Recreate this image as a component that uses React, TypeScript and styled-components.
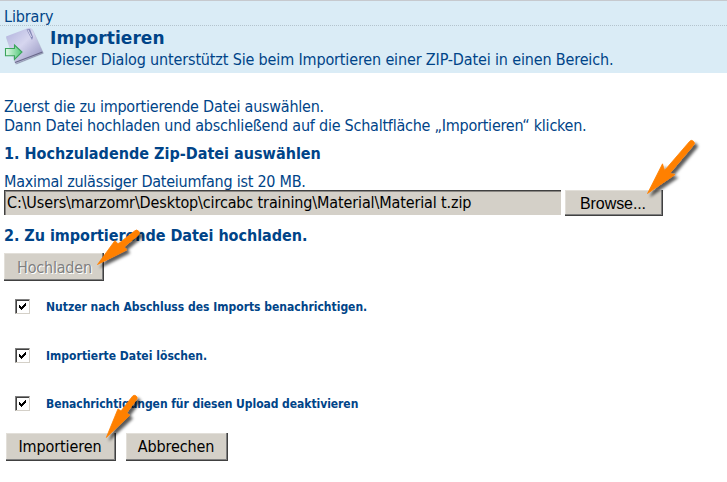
import React from "react";
import styled, { createGlobalStyle, css } from "styled-components";

const GlobalStyle = createGlobalStyle`
  * { box-sizing: border-box; }
  body { margin: 0; background: #fff; }
`;

const tahoma = `"DejaVu Sans Condensed", Tahoma, "DejaVu Sans", sans-serif`;
const navy = "#004488";

const Page = styled.main`
  position: relative;
  width: 727px;
  height: 482px;
  overflow: hidden;
  color: ${navy};
  font-family: ${tahoma};
  font-size: 16px;
  line-height: 19px;
  white-space: nowrap;
`;

const Header = styled.header`
  height: 73px;
  border-top: 1px solid #c6c9ce;
  background: #daecf6;
`;

const Breadcrumb = styled.div`
  height: 25px;
  padding: 6px 0 0 4px;
  border-bottom: 1px dotted #b4c4ce;
  letter-spacing: -0.13px;
`;

const TitleBar = styled.div`
  display: flex;
  gap: 6px;
  padding-left: 4px;
`;

const DialogIcon = styled.svg`
  display: block;
  flex: none;
  width: 40px;
  height: 42px;
`;

const Title = styled.h1`
  margin: 2px 0 0;
  font-family: "DejaVu Sans", Verdana, sans-serif;
  font-size: 17px;
  line-height: 20px;
  letter-spacing: 0.08px;
`;

const Subtitle = styled.p`
  margin: 2px 0 0 1px;
  letter-spacing: -0.15px;
`;

const Form = styled.form`
  display: flex;
  flex-direction: column;
  align-items: flex-start;
  padding: 24px 0 0 4px;
`;

const Note = styled.p<{ $track: number }>`
  margin: 0;
  letter-spacing: ${(p) => p.$track}px;
`;

const Step = styled.h2<{ $above: number; $below: number; $track: number }>`
  margin: ${(p) => p.$above}px 0 ${(p) => p.$below}px;
  font-size: 16px;
  letter-spacing: ${(p) => p.$track}px;
`;

const FileRow = styled.div`
  display: flex;
  gap: 4px;
  margin-top: -1px;
`;

const FilePath = styled.output`
  width: 557px;
  height: 25px;
  padding: 2px 0 0 2px;
  border-top: 1px solid #404040;
  border-left: 1px solid #404040;
  box-shadow: inset 1px 1px #8a8783;
  background: #d4d0c8;
  color: #000;
  letter-spacing: -0.13px;
`;

const Button = styled.button<{ $width: number; $height?: number; $track?: number; $arial?: boolean }>`
  width: ${(p) => p.$width}px;
  height: ${(p) => p.$height ?? 28}px;
  padding: 0 2px 0 0;
  border: 0;
  background: #d4d0c8;
  box-shadow: inset -1px -1px #404040, inset -2px -2px #808080, inset 1px 1px #e2dfd9;
  color: #000;
  font: 16px/19px ${tahoma};
  letter-spacing: ${(p) => p.$track ?? -0.1}px;
  ${(p) =>
    p.$arial &&
    css`
      font-family: "Liberation Sans", Arial, sans-serif;
    `}
  &:disabled {
    padding: 0 0 0 1px;
    color: #808080;
    text-shadow: 1px 1px #fff;
  }
`;

const Options = styled.div`
  display: flex;
  flex-direction: column;
  gap: 33.5px;
  margin: 18px 0 0 11px;
`;

const Option = styled.label<{ $track: number }>`
  display: flex;
  align-items: center;
  gap: 16px;
  height: 15px;
  font-size: 12px;
  font-weight: 700;
  line-height: 15px;
  letter-spacing: ${(p) => p.$track}px;
`;

const OptionText = styled.span`
  padding-top: 2px;
`;

const Box = styled.span`
  display: flex;
  width: 15px;
  height: 15px;
  border: 1px solid;
  border-color: #808080 #d4d0c8 #d4d0c8 #808080;
  box-shadow: inset 1px 1px #404040;
  background: #fff;
`;

const Actions = styled.div`
  display: flex;
  gap: 10px;
  margin: 21.5px 0 0 2px;
`;

const Pointers = styled.svg`
  position: absolute;
  inset: 0;
  width: 727px;
  height: 482px;
  pointer-events: none;
  path { fill: #ff8000; stroke: #ff8000; stroke-width: 0.8; }
`;

function Checked() {
  return (
    <Box>
      <svg width="13" height="13" viewBox="0 0 13 13" shapeRendering="crispEdges">
        <path d="M3 5h1v1h1v1h1v-1h1v-1h1v-1h1v-1h1v3h-1v1h-1v1h-1v1h-1v1h-1v-1h-1v-1h-1z" fill="#000" />
      </svg>
    </Box>
  );
}

export default function App() {
  return (
    <Page>
      <GlobalStyle />
      <Header>
        <Breadcrumb>Library</Breadcrumb>
        <TitleBar>
          <DialogIcon viewBox="0 0 40 42">
            <defs>
              <linearGradient id="sheet" x1="0" y1="0" x2="1" y2="1">
                <stop offset="0" stopColor="#aeb0dc" />
                <stop offset=".45" stopColor="#d6d6ef" />
                <stop offset="1" stopColor="#8c8cba" />
              </linearGradient>
              <linearGradient id="go" x1="0" y1="0" x2="1" y2="0">
                <stop offset="0" stopColor="#e4faeb" />
                <stop offset="1" stopColor="#52c878" />
              </linearGradient>
              <filter id="sheetShade" x="-20%" y="-20%" width="150%" height="150%">
                <feDropShadow dx=".5" dy="1" stdDeviation=".7" floodColor="#555577" floodOpacity=".55" />
              </filter>
            </defs>
            <path d="M2 10.500L25 1.800Q27.500 1.500 28.500 4L39 26.500L11.500 37.500Z" fill="url(#sheet)" filter="url(#sheetShade)" />
            <path d="M11 36.500L38.500 26" stroke="#696989" strokeWidth="1.300" />
            <path d="M22.500 3.500L28 14L29 11L26 3Z" fill="#8588b7" />
            <path d="M24 4L27.500 11" stroke="#dedef4" strokeWidth="1" />
            <path d="M1.500 22.500H10.500V19L18 26L10.500 33.500V29.700H1.500Z" fill="url(#go)" stroke="#3ba45c" strokeWidth="1.100" />
          </DialogIcon>
          <div>
            <Title>Importieren</Title>
            <Subtitle>Dieser Dialog unterstützt Sie beim Importieren einer ZIP-Datei in einen Bereich.</Subtitle>
          </div>
        </TitleBar>
      </Header>

      <Form onSubmit={(e) => e.preventDefault()}>
        <Note $track={-0.24}>Zuerst die zu importierende Datei auswählen.</Note>
        <Note $track={-0.235}>Dann Datei hochladen und abschließend auf die Schaltfläche „Importieren“ klicken.</Note>
        <Step $above={9} $below={9} $track={0.01}>1. Hochzuladende Zip-Datei auswählen</Step>
        <Note $track={-0.25}>Maximal zulässiger Dateiumfang ist 20 MB.</Note>
        <FileRow>
          <FilePath>C:\Users\marzomr\Desktop\circabc training\Material\Material t.zip</FilePath>
          <Button type="button" $width={98} $height={26} $track={-0.08} $arial>Browse...</Button>
        </FileRow>
        <Step $above={10} $below={8} $track={-0.04}>2. Zu importierende Datei hochladen.</Step>
        <Button type="button" $width={100} $track={-0.2} disabled>Hochladen</Button>
        <Options>
          <Option $track={0}><Checked /><OptionText>Nutzer nach Abschluss des Imports benachrichtigen.</OptionText></Option>
          <Option $track={0.03}><Checked /><OptionText>Importierte Datei löschen.</OptionText></Option>
          <Option $track={-0.05}><Checked /><OptionText>Benachrichtigungen für diesen Upload deaktivieren</OptionText></Option>
        </Options>
        <Actions>
          <Button type="submit" $width={110}>Importieren</Button>
          <Button type="button" $width={102}>Abbrechen</Button>
        </Actions>
      </Form>

      <Pointers viewBox="0 0 727 482">
        <defs>
          <filter id="pointerShade" x="-20%" y="-20%" width="160%" height="160%">
            <feDropShadow dx="3" dy="3" stdDeviation="1.500" floodColor="#000" floodOpacity=".65" />
          </filter>
        </defs>
        <g filter="url(#pointerShade)">
          <path d="M647.500 193.500L662.500 163.800L664.500 170.500L689.500 141.500A2.600 2.600 0 0 1 693.700 145L669.700 173.500L675 174.500Z" />
          <path d="M97.500 264.500L115 240.500L118 244L134.500 231A2.700 2.700 0 0 1 138.500 235L124 247L127 249.800Z" />
          <path d="M106.300 437.500L118 408.800L121 411L132.500 396.200A2.700 2.700 0 0 1 137 399L126.600 413L129.700 415.300Z" />
        </g>
      </Pointers>
    </Page>
  );
}
